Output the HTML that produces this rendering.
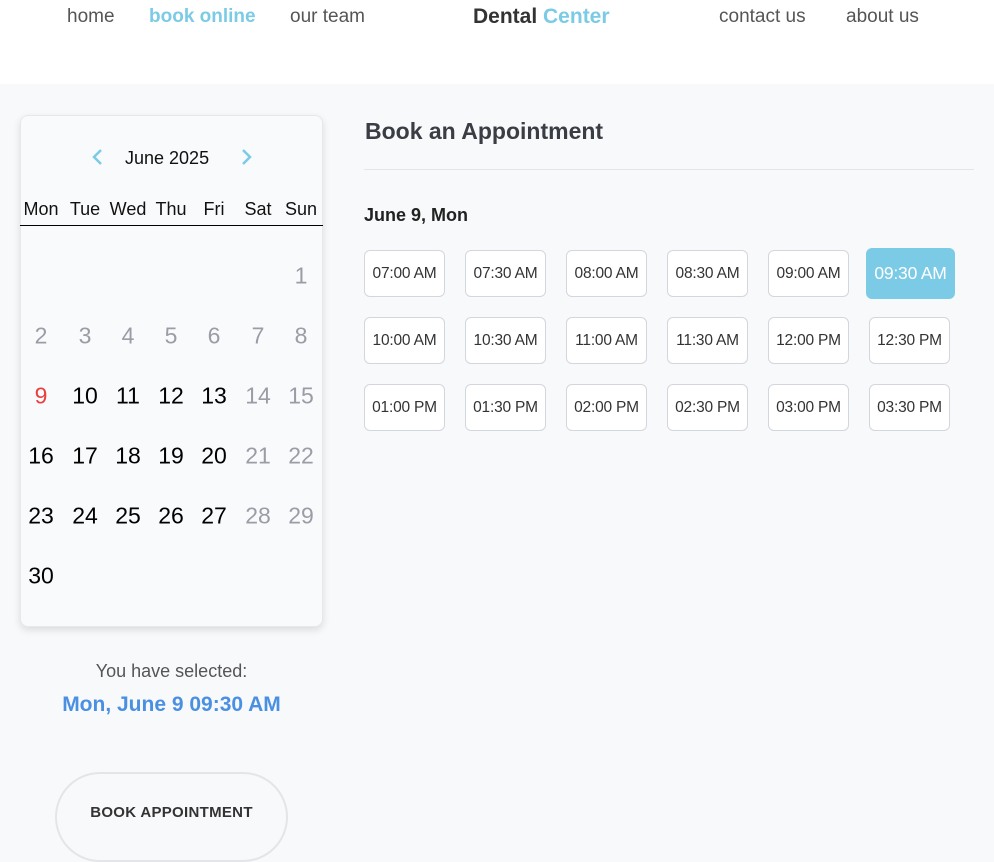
<!DOCTYPE html>
<html><head><style>
*{margin:0;padding:0;box-sizing:border-box}
body{width:994px;height:848px;overflow:hidden;background:#f8f9fb;font-family:"Liberation Sans",sans-serif;position:relative}
.top{position:absolute;left:0;top:0;width:994px;height:84px;background:#fff}
.nav{position:absolute;top:6px;font-size:19px;color:#555}
.abs{position:absolute}
.card{position:absolute;left:20px;top:115px;width:303px;height:512px;background:#f9fafc;border:1px solid #e6e8ec;border-radius:8px;box-shadow:0 3px 8px rgba(0,0,0,.12)}
.d{position:absolute;width:40px;text-align:center;font-size:23px;color:#000;transform:translate(-50%,-50%)}
.g{color:#9a9da5}
.h{position:absolute;font-size:18px;color:#111;transform:translateX(-50%);top:199px}
.slot{position:absolute;width:81px;height:47px;border:1px solid #d3d6dc;border-radius:6px;background:#fff;font-size:15.5px;letter-spacing:-0.2px;color:#333;display:flex;align-items:center;justify-content:center}
</style></head><body>
<div class="top"></div>
<div class="nav" style="left:67px">home</div>
<div class="nav" style="left:149px;color:#7ccbe6;font-weight:bold">book online</div>
<div class="nav" style="left:290px">our team</div>
<div class="nav" style="left:473px;font-size:21px;font-weight:bold;color:#333;top:5px">Dental <span style="color:#7ccbe6">Center</span></div>
<div class="nav" style="left:719px">contact us</div>
<div class="nav" style="left:846px">about us</div>

<div class="card"></div>
<svg class="abs" style="left:90px;top:148px" width="14" height="18"><path d="M11 2 L4 9 L11 16" stroke="#7ccbe6" stroke-width="2.5" fill="none"/></svg>
<div class="abs" style="left:125px;top:148px;font-size:18px;color:#111">June 2025</div>
<svg class="abs" style="left:240px;top:148px" width="14" height="18"><path d="M3 2 L10 9 L3 16" stroke="#7ccbe6" stroke-width="2.5" fill="none"/></svg>
<div class="h" style="left:41px">Mon</div><div class="h" style="left:85px">Tue</div><div class="h" style="left:128px">Wed</div><div class="h" style="left:171px">Thu</div><div class="h" style="left:214px">Fri</div><div class="h" style="left:258px">Sat</div><div class="h" style="left:301px">Sun</div>
<div class="abs" style="left:20px;top:225px;width:303px;height:1px;background:#000"></div>
<div id="days"></div>

<div class="abs" style="left:0;width:343px;top:661px;text-align:center;font-size:18px;color:#555">You have selected:</div>
<div class="abs" style="left:0;width:343px;top:693px;text-align:center;font-size:21px;font-weight:bold;color:#4a90e2">Mon, June 9 09:30 AM</div>
<div class="abs" style="left:55px;top:772px;width:233px;height:90px;border:2px solid #e3e5e8;border-radius:45px;text-align:center;padding-top:30px;font-size:15px;font-weight:bold;color:#333;letter-spacing:0.3px">BOOK APPOINTMENT</div>

<div class="abs" style="left:365px;top:118px;font-size:23px;font-weight:bold;color:#3a3d44">Book an Appointment</div>
<div class="abs" style="left:364px;top:169px;width:610px;height:1px;background:#e3e5e8"></div>
<div class="abs" style="left:364px;top:205px;font-size:18px;font-weight:bold;color:#222">June 9, Mon</div>
<div id="slots"></div>
<script>
var cx=[41,85,128,171,214,258,301],ry=[276,336,396,456,516,576],h='';
for(var d=1;d<=30;d++){var i=d+5,c=i%7,r=Math.floor(i/7);var cl=d<9?'d g':(c>=5?'d g':'d');var st=d==9?'color:#e84040;':'';h+='<div class="'+cl+'" style="'+st+'left:'+cx[c]+'px;top:'+ry[r]+'px">'+d+'</div>'}
document.getElementById('days').innerHTML=h;
var t=['07:00 AM','07:30 AM','08:00 AM','08:30 AM','09:00 AM','09:30 AM','10:00 AM','10:30 AM','11:00 AM','11:30 AM','12:00 PM','12:30 PM','01:00 PM','01:30 PM','02:00 PM','02:30 PM','03:00 PM','03:30 PM'],s='';
for(var k=0;k<18;k++){var x=364+101*(k%6),y=250+67*Math.floor(k/6);
if(k==5)s+='<div class="slot" style="left:866px;top:248px;width:89px;height:51px;background:#7ccbe6;border-color:#7ccbe6;color:#fff;font-size:17.5px">'+t[k]+'</div>';
else s+='<div class="slot" style="left:'+x+'px;top:'+y+'px">'+t[k]+'</div>'}
document.getElementById('slots').innerHTML=s;
</script>
</body></html>
